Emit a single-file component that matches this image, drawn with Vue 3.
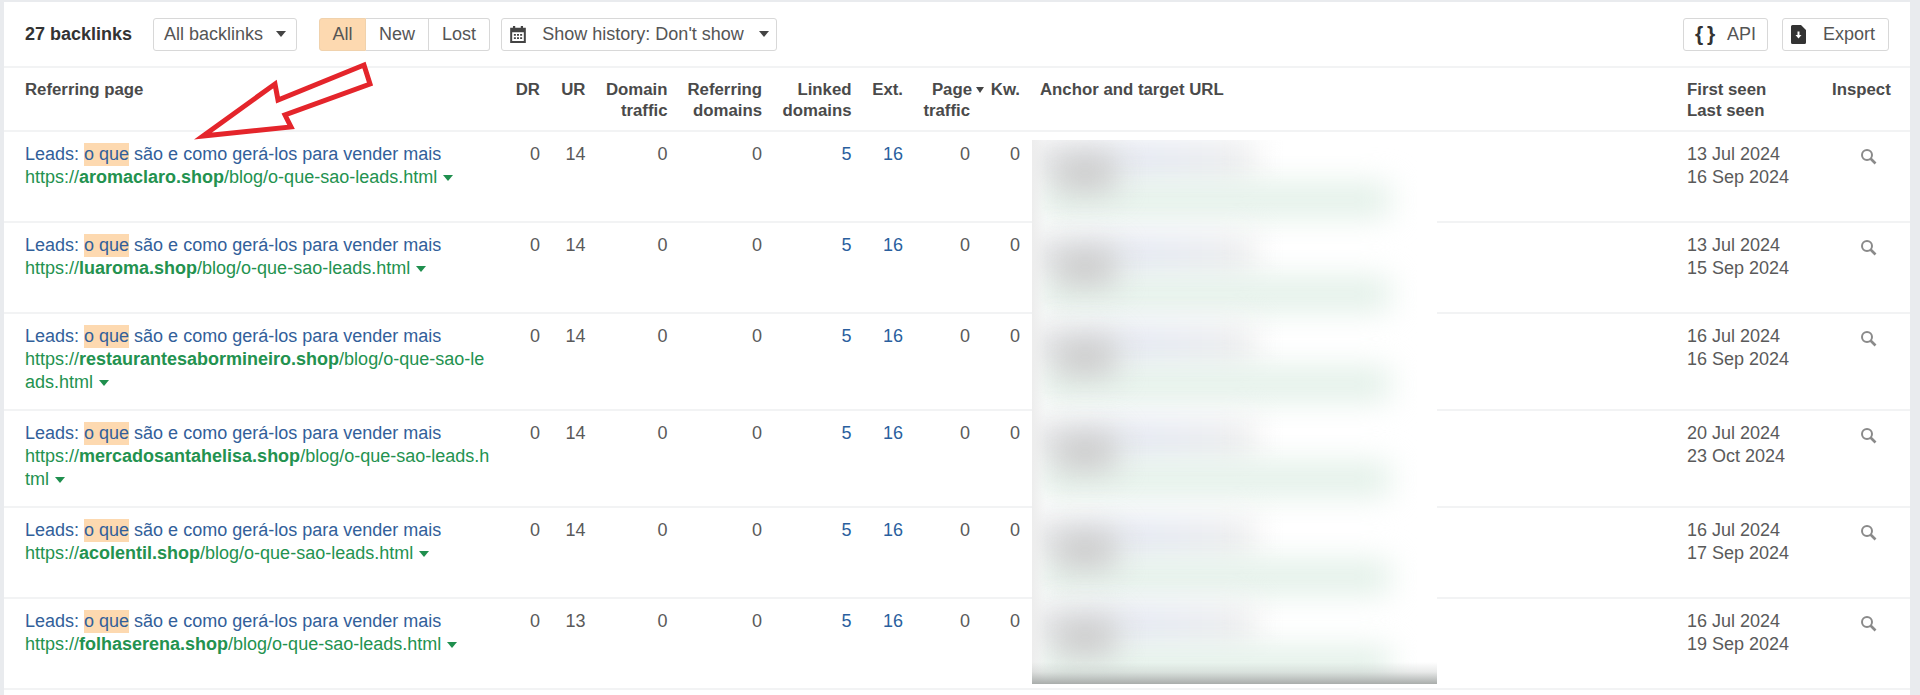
<template>
  <div class="page">
    <div class="panel">
      <div class="toolbar">
        <b class="count">27 backlinks</b>
        <button class="btn drop">All backlinks <i class="caret"></i></button>
        <div class="seg">
          <button class="on">All</button>
          <button>New</button>
          <button>Lost</button>
        </div>
        <button class="btn history">
          <svg width="18" height="19" viewBox="0 0 16 17"><path fill="#444" fill-rule="evenodd" d="M1 2.500h2.500V1h2v1.500h5V1h2v1.500H15V16H1zM2.800 6.500v7.800h10.400V6.500zM4.300 8h1.800v1.600H4.300zM7.100 8h1.800v1.600H7.100zM9.900 8h1.800v1.600H9.900zM4.300 11h1.800v1.600H4.300zM7.100 11h1.800v1.600H7.100zM9.900 11h1.800v1.600H9.900z"/></svg>
          Show history: Don't show <i class="caret"></i>
        </button>
        <div class="spacer"></div>
        <button class="btn api"><b class="braces">{ }</b> API</button>
        <button class="btn export">
          <svg width="15" height="19" viewBox="0 0 15 19"><path fill="#333" fill-rule="evenodd" d="M1.500 0H10l5 5v12.500a1.500 1.500 0 0 1-1.500 1.500h-12A1.500 1.500 0 0 1 0 17.500v-16A1.500 1.500 0 0 1 1.500 0zM6.500 6.500V10H4.500l3 3.500 3-3.500H8.500V6.500z"/></svg>
          Export
        </button>
      </div>

      <table>
        <colgroup>
          <col v-for="w in widths" :key="w.id" :style="{ width: w.px + 'px' }" />
        </colgroup>
        <thead>
          <tr>
            <th class="left first">Referring page</th>
            <th>DR</th>
            <th>UR</th>
            <th>Domain<br />traffic</th>
            <th>Referring<br />domains</th>
            <th>Linked<br />domains</th>
            <th>Ext.</th>
            <th>Page<i class="caret sort"></i><br />traffic</th>
            <th>Kw.</th>
            <th class="left">Anchor and target URL</th>
            <th class="left">First seen<br />Last seen</th>
            <th class="last">Inspect</th>
          </tr>
        </thead>
        <tbody>
          <tr v-for="r in rows" :key="r.domain" :class="{ tall: r.tall }">
            <td class="left first ref">
              <div class="title">Leads: <mark>o que</mark> são e como gerá-los para vender mais</div>
              <div class="url">https://<b>{{ r.domain }}</b>/blog/o-que-sao-leads.html <i class="caret green"></i></div>
            </td>
            <td>0</td>
            <td>{{ r.ur }}</td>
            <td>0</td>
            <td>0</td>
            <td class="link">5</td>
            <td class="link">16</td>
            <td>0</td>
            <td>0</td>
            <td></td>
            <td class="left">{{ r.first }}<br />{{ r.last }}</td>
            <td class="last">
              <svg class="lens" width="17" height="17" viewBox="0 0 17 17"><circle cx="7" cy="7" r="5" fill="none" stroke="#8a8a8a" stroke-width="2"/><path d="M10.500 10.500l5 5" stroke="#8a8a8a" stroke-width="2.600"/></svg>
            </td>
          </tr>
        </tbody>
      </table>

      <div class="redacted">
        <template v-for="(t, i) in blobCenters" :key="i">
          <span class="blob blue" :style="{ top: t - 34 + 'px' }"></span>
          <span class="blob mint" :style="{ top: t + 10 + 'px' }"></span>
          <span class="blob grey" :style="{ top: t - 20 + 'px' }"></span>
        </template>
        <span class="fringe"></span>
        <span class="shade"></span>
      </div>

      <svg class="arrow" width="190" height="90" viewBox="0 0 190 90">
        <path d="M9 76L81 24 84 40 170 5 176 24 91 55 97 67z" fill="#fff" stroke="#e4252b" stroke-width="5"/>
      </svg>
    </div>
  </div>
</template>

<script setup>
const widths = [
  { id: 'ref', px: 498 },
  { id: 'dr', px: 48 },
  { id: 'ur', px: 45.5 },
  { id: 'dt', px: 82 },
  { id: 'rd', px: 94.5 },
  { id: 'ld', px: 89.5 },
  { id: 'ext', px: 51.5 },
  { id: 'pt', px: 67 },
  { id: 'kw', px: 50 },
  { id: 'anchor', px: 647 },
  { id: 'seen', px: 145 },
  { id: 'ins', px: 88 },
];

const rows = [
  { domain: 'aromaclaro.shop', ur: 14, first: '13 Jul 2024', last: '16 Sep 2024' },
  { domain: 'luaroma.shop', ur: 14, first: '13 Jul 2024', last: '15 Sep 2024' },
  { domain: 'restaurantesabormineiro.shop', ur: 14, first: '16 Jul 2024', last: '16 Sep 2024', tall: true },
  { domain: 'mercadosantahelisa.shop', ur: 14, first: '20 Jul 2024', last: '23 Oct 2024', tall: true },
  { domain: 'acolentil.shop', ur: 14, first: '16 Jul 2024', last: '17 Sep 2024' },
  { domain: 'folhaserena.shop', ur: 13, first: '16 Jul 2024', last: '19 Sep 2024' },
];

// vertical centre of each blurred anchor cell, from the top of the redacted block
const blobCenters = [33, 127, 217, 312, 410, 497];
</script>

<style>
html, body {
  margin: 0;
  background: #e9ebee;
}
</style>

<style scoped>
.page {
  height: 695px;
  padding: 2px 10px 0 4px;
  box-sizing: border-box;
  overflow: hidden;
  font-family: "Liberation Sans", Arial, sans-serif;
}

.panel {
  position: relative;
  background: #fff;
  height: 693px;
  color: #444;
  font-size: 18px;
}

.toolbar {
  display: flex;
  align-items: center;
  height: 64px;
  padding: 0 21px;
  border-bottom: 2px solid #f2f3f4;
}

.count {
  color: #333;
  margin-right: 21px;
}

.btn,
.seg button {
  height: 33px;
  font: inherit;
  color: #555;
  background: #fff;
  border: 1px solid #d8d8d8;
  border-radius: 3px;
  padding: 0;
}

.btn {
  display: flex;
  align-items: center;
  justify-content: center;
  gap: 8px;
  white-space: pre;
}

.drop { width: 144px; }
.history { width: 276px; margin-left: 11px; gap: 10px; }
.api { width: 85px; gap: 9px; }
.export { width: 107px; margin-left: 14px; gap: 12px; }

.braces {
  color: #333;
  font-size: 21px;
  letter-spacing: -1px;
}

.seg {
  display: flex;
  margin-left: 22px;
}

.seg button {
  border-radius: 0;
  border-left: none;
  width: 63px;
}

.seg button:first-child {
  width: 47px;
  border: 1px solid #f0d2ad;
  border-radius: 3px 0 0 3px;
  background: #fdd9b0;
}

.seg button:last-child {
  width: 61px;
  border-radius: 0 3px 3px 0;
}

.spacer { flex: 1; }

.caret {
  display: inline-block;
  width: 0;
  height: 0;
  border-left: 5px solid transparent;
  border-right: 5px solid transparent;
  border-top: 6px solid #444;
  vertical-align: 2px;
}

.caret.sort {
  margin: 0 -14px 0 4px;
  border-left-width: 4.500px;
  border-right-width: 4.500px;
}

.caret.green {
  border-top-color: #1f8f4e;
  margin-left: 1px;
}

table {
  width: 1906px;
  border-collapse: collapse;
  table-layout: fixed;
}

th,
td {
  padding: 0 10px;
  text-align: right;
  vertical-align: top;
  box-sizing: border-box;
}

th {
  height: 63px;
  padding-top: 11px;
  font-size: 16.800px;
  line-height: 21px;
  color: #4a4a4a;
  white-space: nowrap;
  border-bottom: 2px solid #f2f3f4;
}

td {
  height: 91px;
  padding-top: 11px;
  line-height: 23px;
  color: #5a5a5a;
  border-bottom: 2px solid #f2f3f4;
}

tr.tall td { height: 97px; }

.left { text-align: left; }
.first { padding-left: 21px; }
.last { padding-right: 21px; }
.link { color: #2a5f9e; }

.ref { word-break: break-all; }

.title { color: #32609a; }

mark {
  display: inline-block;
  background: #fdd9b0;
  color: inherit;
}

.url { color: #23924f; }

.lens {
  margin: 5px 12px 0 0;
}

.redacted {
  position: absolute;
  left: 1028px;
  top: 138px;
  width: 405px;
  height: 544px;
  overflow: hidden;
  background: #fff;
}

.blob {
  position: absolute;
  filter: blur(15px);
}

.blue {
  left: -16px;
  width: 240px;
  height: 44px;
  background: linear-gradient(90deg, #ececec, #e5e9f2 55%, #eeeeee);
}

.mint {
  left: 8px;
  width: 350px;
  height: 34px;
  background: #e2f0e8;
}

.grey {
  left: 22px;
  width: 62px;
  height: 40px;
  background: #cdcdcd;
}

.fringe {
  position: absolute;
  left: 0;
  top: 0;
  bottom: 0;
  width: 14px;
  background: linear-gradient(90deg, #ededed, rgba(237, 237, 237, 0));
}

.shade {
  position: absolute;
  left: 0;
  right: 0;
  bottom: 0;
  height: 22px;
  background: linear-gradient(rgba(165, 170, 168, 0), rgba(165, 170, 168, 0.25) 45%, #a9adab);
}

.arrow {
  position: absolute;
  left: 190px;
  top: 58px;
}
</style>
